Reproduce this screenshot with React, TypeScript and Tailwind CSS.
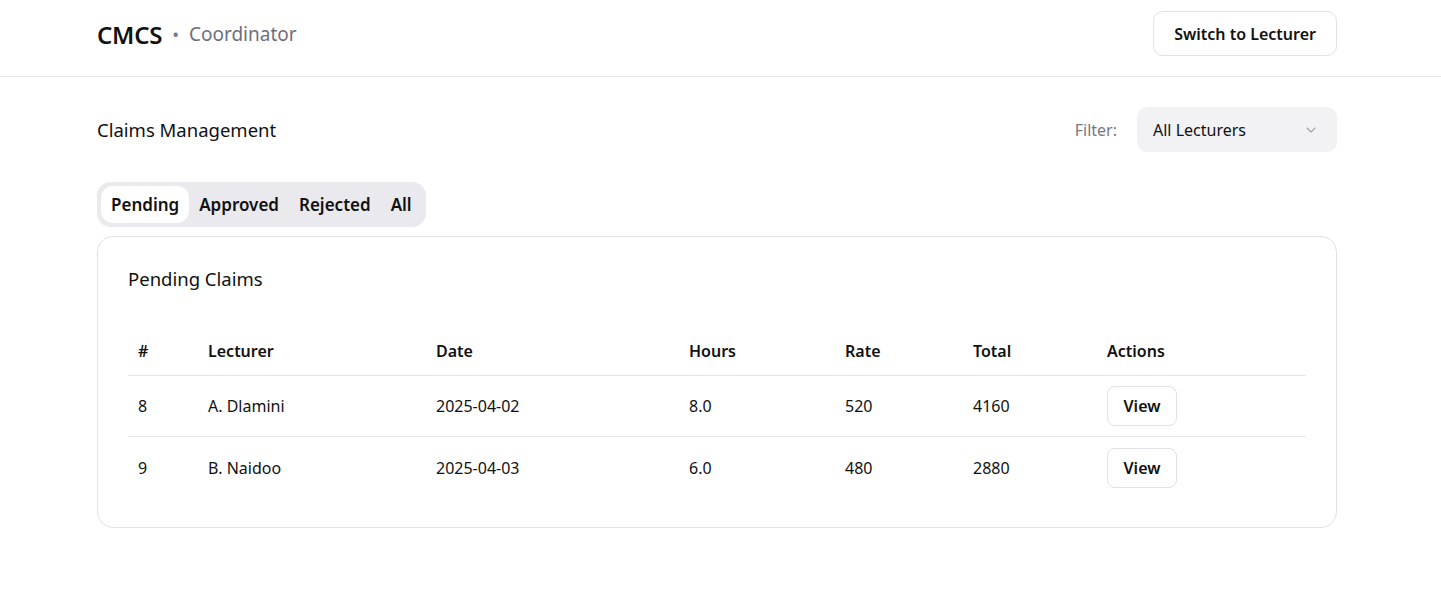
import { useState } from 'react';

type Claim = {
  id: number;
  lecturer: string;
  date: string;
  hours: string;
  rate: number;
  total: number;
};

const claims: Claim[] = [
  { id: 8, lecturer: 'A. Dlamini', date: '2025-04-02', hours: '8.0', rate: 520, total: 4160 },
  { id: 9, lecturer: 'B. Naidoo', date: '2025-04-03', hours: '6.0', rate: 480, total: 2880 },
];

const tabs = ['Pending', 'Approved', 'Rejected', 'All'];

const ChevronDown = () => (
  <svg width="16" height="16" viewBox="0 0 24 24" fill="none" stroke="#a0a0a8" strokeWidth="1.6" strokeLinecap="round" strokeLinejoin="round">
    <path d="m6 9 6 6 6-6" />
  </svg>
);

export default function App() {
  const [tab, setTab] = useState('Pending');

  return (
    <div className="min-h-screen bg-white text-[#111] font-['Noto_Sans','Open_Sans',sans-serif]">
      {/* Top bar */}
      <header className="border-b border-[#e5e5e8] h-[77px]">
        <div className="ml-[97px] w-[1240px] pt-[11px] flex items-center justify-between">
          <div className="flex items-center gap-[10px] pt-[2px]">
            <span className="text-[24px] font-semibold tracking-[-0.01em]">CMCS</span>
            <span className="text-[#77778a] text-[18px]">•</span>
            <span className="text-[#6e6e80] text-[19px]">Coordinator</span>
          </div>
          <button className="h-[45px] px-5 rounded-[10px] border border-[#e2e2e6] bg-white text-[16px] font-semibold">
            Switch to Lecturer
          </button>
        </div>
      </header>

      <main className="ml-[97px] w-[1240px] pt-[30px]">
        {/* Title + filter */}
        <div className="flex items-center justify-between">
          <h1 className="text-[18.5px] font-normal">Claims Management</h1>
          <div className="flex items-center gap-5">
            <span className="text-[#77777f] text-[16px]">Filter:</span>
            <div className="w-[200px] h-[45px] rounded-[10px] bg-[#f2f2f4] flex items-center justify-between pl-4 pr-[18px]">
              <span className="text-[16px]">All Lecturers</span>
              <ChevronDown />
            </div>
          </div>
        </div>

        {/* Tabs */}
        <div className="mt-[30px] inline-flex items-center h-[45px] p-1 rounded-[14px] bg-[#e9e9ee]">
          {tabs.map((t) => (
            <button
              key={t}
              onClick={() => setTab(t)}
              className={`h-[37px] px-[10px] rounded-[12px] text-[17px] font-semibold ${
                tab === t ? 'bg-white' : ''
              }`}
            >
              {t}
            </button>
          ))}
        </div>

        {/* Card */}
        <section className="mt-[9px] border border-[#e2e2e6] rounded-[16px] px-[30px] pt-[28px] pb-[29px]">
          <h2 className="text-[18.5px] font-normal">Pending Claims</h2>
          <table className="mt-[34px] w-full table-fixed text-left text-[16px]">
            <thead>
              <tr className="border-b border-[#e5e5e8] h-[49px]">
                <th className="w-[80px] pl-[10px] font-semibold">#</th>
                <th className="w-[228px] font-semibold">Lecturer</th>
                <th className="w-[253px] font-semibold">Date</th>
                <th className="w-[156px] font-semibold">Hours</th>
                <th className="w-[128px] font-semibold">Rate</th>
                <th className="w-[134px] font-semibold">Total</th>
                <th className="font-semibold">Actions</th>
              </tr>
            </thead>
            <tbody>
              {claims.map((c, i) => (
                <tr key={c.id} className={`h-[61px] ${i < claims.length - 1 ? 'border-b border-[#e5e5e8]' : ''}`}>
                  <td className="pl-[10px]">{c.id}</td>
                  <td>{c.lecturer}</td>
                  <td>{c.date}</td>
                  <td>{c.hours}</td>
                  <td>{c.rate}</td>
                  <td>{c.total}</td>
                  <td>
                    <button className="w-[70px] h-[40px] rounded-[8px] border border-[#e2e2e6] bg-white font-semibold">
                      View
                    </button>
                  </td>
                </tr>
              ))}
            </tbody>
          </table>
        </section>
      </main>
    </div>
  );
}
